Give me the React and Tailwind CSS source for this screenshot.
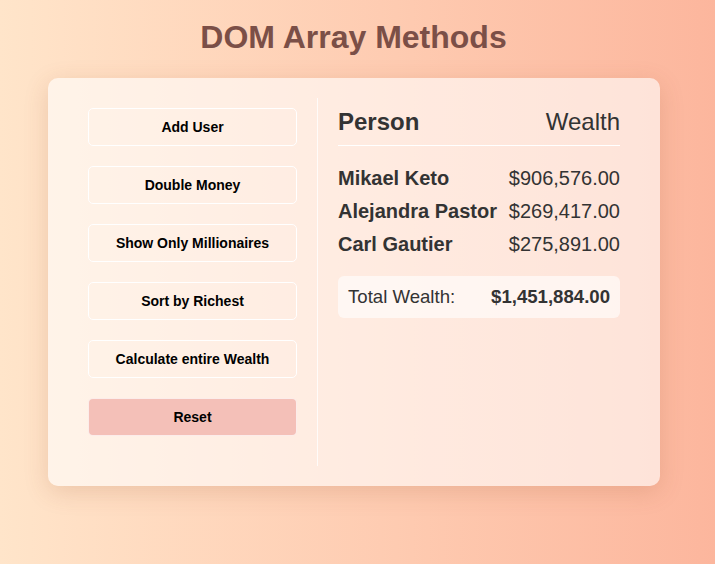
const users = [
  { name: 'Mikael Keto', money: '$906,576.00' },
  { name: 'Alejandra Pastor', money: '$269,417.00' },
  { name: 'Carl Gautier', money: '$275,891.00' },
]

const actions = ['Add User', 'Double Money', 'Show Only Millionaires', 'Sort by Richest', 'Calculate entire Wealth']

const App = () => {
  return (
    <div className="min-h-[564px] w-full bg-gradient-to-r from-[#ffe5ca] to-[#fcb69d] pt-[17px] pb-10 font-['Liberation_Sans',Arial,sans-serif]">
      <h1 className="ml-[-8px] text-center text-[32px] font-bold leading-[40px] text-[#7b4f47]">DOM Array Methods</h1>

      <div className="ml-[48px] mt-[21px] flex w-[612px] rounded-[10px] bg-white/60 px-10 py-5 shadow-[0_6px_24px_rgba(150,80,40,0.18)]">
        {/* buttons */}
        <div className="flex w-[230px] flex-col gap-5 border-r border-white/80 pr-5 pt-[10px] pb-[30px]">
          {actions.map((a) => (
            <button key={a} className="h-[38px] w-full rounded-[5px] border border-white pt-px text-[14px] font-bold text-black">
              {a}
            </button>
          ))}
          <button className="h-[38px] w-full rounded-[5px] border border-white/70 bg-[#f4c0b8] pt-px text-[14px] font-bold text-black">
            Reset
          </button>
        </div>

        {/* table */}
        <div className="flex-1 pl-5 text-[#333]">
          <div className="flex items-center justify-between border-b border-white pt-[10px] pb-[10px] text-[24px] leading-[27px]">
            <span className="font-bold">Person</span>
            <span>Wealth</span>
          </div>
          <div className="mt-[16px]">
            {users.map((u) => (
              <div key={u.name} className="flex justify-between text-[20px] leading-[33px]">
                <span className="font-bold">{u.name}</span>
                <span>{u.money}</span>
              </div>
            ))}
          </div>
          <div className="mt-[15px] flex h-[42px] items-center justify-between rounded-[6px] bg-white/60 px-[10px] text-[18.6px]">
            <span>Total Wealth:</span>
            <span className="font-bold">$1,451,884.00</span>
          </div>
        </div>
      </div>
    </div>
  )
}

export default App
